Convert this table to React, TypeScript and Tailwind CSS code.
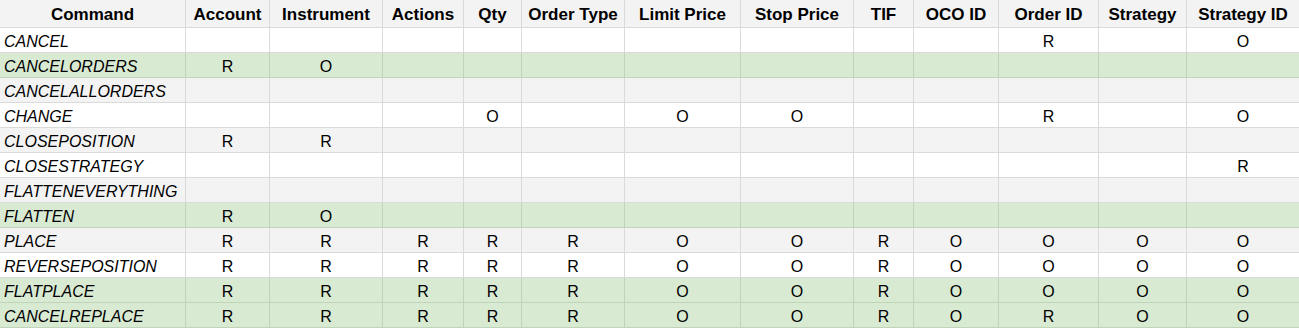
const headers = [
  'Command',
  'Account',
  'Instrument',
  'Actions',
  'Qty',
  'Order Type',
  'Limit Price',
  'Stop Price',
  'TIF',
  'OCO ID',
  'Order ID',
  'Strategy',
  'Strategy ID',
]

type Tone = 'white' | 'gray' | 'green'

const rows: { name: string; tone: Tone; cells: string[] }[] = [
  { name: 'CANCEL', tone: 'white', cells: ['', '', '', '', '', '', '', '', '', 'R', '', 'O'] },
  { name: 'CANCELORDERS', tone: 'green', cells: ['R', 'O', '', '', '', '', '', '', '', '', '', ''] },
  { name: 'CANCELALLORDERS', tone: 'gray', cells: ['', '', '', '', '', '', '', '', '', '', '', ''] },
  { name: 'CHANGE', tone: 'white', cells: ['', '', '', 'O', '', 'O', 'O', '', '', 'R', '', 'O'] },
  { name: 'CLOSEPOSITION', tone: 'gray', cells: ['R', 'R', '', '', '', '', '', '', '', '', '', ''] },
  { name: 'CLOSESTRATEGY', tone: 'white', cells: ['', '', '', '', '', '', '', '', '', '', '', 'R'] },
  { name: 'FLATTENEVERYTHING', tone: 'gray', cells: ['', '', '', '', '', '', '', '', '', '', '', ''] },
  { name: 'FLATTEN', tone: 'green', cells: ['R', 'O', '', '', '', '', '', '', '', '', '', ''] },
  { name: 'PLACE', tone: 'gray', cells: ['R', 'R', 'R', 'R', 'R', 'O', 'O', 'R', 'O', 'O', 'O', 'O'] },
  { name: 'REVERSEPOSITION', tone: 'white', cells: ['R', 'R', 'R', 'R', 'R', 'O', 'O', 'R', 'O', 'O', 'O', 'O'] },
  { name: 'FLATPLACE', tone: 'green', cells: ['R', 'R', 'R', 'R', 'R', 'O', 'O', 'R', 'O', 'O', 'O', 'O'] },
  { name: 'CANCELREPLACE', tone: 'green', cells: ['R', 'R', 'R', 'R', 'R', 'O', 'O', 'R', 'O', 'R', 'O', 'O'] },
]

const toneClass: Record<Tone, string> = {
  white: 'bg-white border-[#dadada]',
  gray: 'bg-[#f3f3f3] border-[#dadada]',
  green: 'bg-[#d9ead3] border-[#bfd4b8]',
}

const grid =
  'grid grid-cols-[186px_84px_113px_81px_58px_103px_116px_113px_60px_85px_100px_88px_112px]'

export default function App() {
  return (
    <div className="w-[1299px] h-[328px] bg-white font-['Liberation_Sans',Arial,sans-serif] text-black overflow-hidden">
      <div className={grid}>
        {headers.map((h, i) => (
          <div
            key={h}
            className={`h-[28px] bg-[#f3f3f3] border-b border-[#dadada] flex items-end justify-center pb-[3px] text-[17px] leading-[19px] font-bold whitespace-nowrap ${
              i < headers.length - 1 ? 'border-r' : ''
            }`}
          >
            {h}
          </div>
        ))}
      </div>

      {rows.map((row) => (
        <div key={row.name} className={grid}>
          <div
            className={`h-[25px] border-b border-r flex items-end pl-[4px] pb-[1px] text-[16px] leading-[18px] italic ${toneClass[row.tone]}`}
          >
            {row.name}
          </div>
          {row.cells.map((c, i) => (
            <div
              key={i}
              className={`h-[25px] border-b flex items-end justify-center pb-[1px] text-[16px] leading-[18px] ${
                i < row.cells.length - 1 ? 'border-r' : ''
              } ${toneClass[row.tone]}`}
            >
              {c}
            </div>
          ))}
        </div>
      ))}
    </div>
  )
}
